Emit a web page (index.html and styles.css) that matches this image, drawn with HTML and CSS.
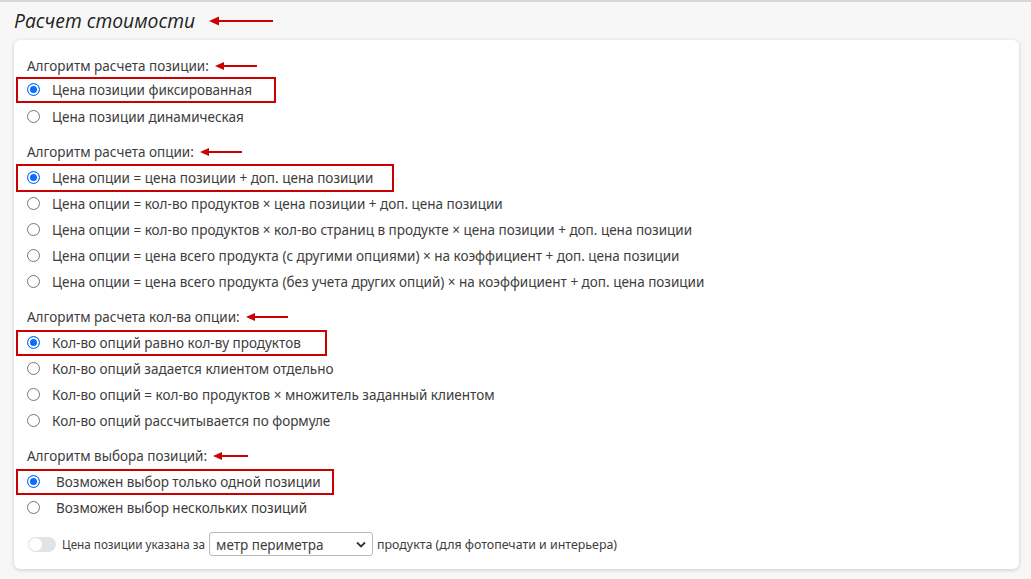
FILE: index.html
```html
<!DOCTYPE html>
<html lang="ru">
<head>
<meta charset="utf-8">
<link rel="stylesheet" href="styles.css">
</head>
<body>
<div class="page">
  <h1 class="title">Расчет стоимости <svg class="arrow big" width="64" height="10" viewBox="0 0 64 10"><polygon points="0,5 10,0.5 10,9.5" fill="#cc0000"/><rect x="8" y="4" width="56" height="2" fill="#cc0000"/></svg></h1>
  <div class="card">
    <div class="group first">
      <div class="label">Алгоритм расчета позиции: <svg class="arrow" width="42" height="8" viewBox="0 0 42 8"><polygon points="0,4 9,0 9,8" fill="#cc0000"/><rect x="7" y="3" width="35" height="2" fill="#cc0000"/></svg></div>
      <div class="row hl p1"><span class="radio on"></span><span>Цена позиции фиксированная</span></div>
      <div class="row"><span class="radio"></span><span>Цена позиции динамическая</span></div>
    </div>
    <div class="group">
      <div class="label">Алгоритм расчета опции: <svg class="arrow" width="42" height="8" viewBox="0 0 42 8"><polygon points="0,4 9,0 9,8" fill="#cc0000"/><rect x="7" y="3" width="35" height="2" fill="#cc0000"/></svg></div>
      <div class="row hl p2"><span class="radio on"></span><span>Цена опции = цена позиции + доп. цена позиции</span></div>
      <div class="row"><span class="radio"></span><span>Цена опции = кол-во продуктов × цена позиции + доп. цена позиции</span></div>
      <div class="row"><span class="radio"></span><span>Цена опции = кол-во продуктов × кол-во страниц в продукте × цена позиции + доп. цена позиции</span></div>
      <div class="row"><span class="radio"></span><span>Цена опции = цена всего продукта (с другими опциями) × на коэффициент + доп. цена позиции</span></div>
      <div class="row"><span class="radio"></span><span>Цена опции = цена всего продукта (без учета других опций) × на коэффициент + доп. цена позиции</span></div>
    </div>
    <div class="group">
      <div class="label">Алгоритм расчета кол-ва опции: <svg class="arrow" width="42" height="8" viewBox="0 0 42 8"><polygon points="0,4 9,0 9,8" fill="#cc0000"/><rect x="7" y="3" width="35" height="2" fill="#cc0000"/></svg></div>
      <div class="row hl p3"><span class="radio on"></span><span>Кол-во опций равно кол-ву продуктов</span></div>
      <div class="row"><span class="radio"></span><span>Кол-во опций задается клиентом отдельно</span></div>
      <div class="row"><span class="radio"></span><span>Кол-во опций = кол-во продуктов × множитель заданный клиентом</span></div>
      <div class="row"><span class="radio"></span><span>Кол-во опций рассчитывается по формуле</span></div>
    </div>
    <div class="group last">
      <div class="label">Алгоритм выбора позиций: <svg class="arrow" width="35" height="8" viewBox="0 0 35 8"><polygon points="0,4 9,0 9,8" fill="#cc0000"/><rect x="7" y="3" width="28" height="2" fill="#cc0000"/></svg></div>
      <div class="row hl p4 wide"><span class="radio on"></span><span>Возможен выбор только одной позиции</span></div>
      <div class="row wide"><span class="radio"></span><span>Возможен выбор нескольких позиций</span></div>
    </div>
    <div class="switch-row">
      <span class="toggle"><span class="knob"></span></span>
      <span class="small">Цена позиции указана за</span>
      <span class="select">метр периметра<svg class="chev" width="10" height="7" viewBox="0 0 10 7"><path d="M1 1.5 L5 5.5 L9 1.5" fill="none" stroke="#333" stroke-width="1.8"/></svg></span>
      <span class="small tail">продукта (для фотопечати и интерьера)</span>
    </div>
  </div>
</div>
</body>
</html>
```
FILE: styles.css
```css
* { box-sizing: border-box; }
html, body { margin: 0; padding: 0; }
body {
  background: #f7f7f7;
  font-family: "Noto Sans", "Open Sans", sans-serif;
  color: #3d3d3d;
  width: 1031px;
  height: 579px;
  overflow: hidden;
  border-top: 2px solid #d6d6d6;
}
.page { padding: 0 12px 0 14px; }
.title {
  margin: 0;
  height: 38px;
  display: flex;
  align-items: center;
  font-family: "Open Sans", "Noto Sans", sans-serif;
  font-style: italic;
  font-weight: 400;
  font-size: 19.3px;
  color: #222;
  padding-bottom: 2px;
}
.arrow { display: inline-block; flex: none; }
.arrow.big { margin-left: 14px; margin-top: 2px; }
.card {
  background: #fff;
  border-radius: 6px;
  box-shadow: 0 1px 4px rgba(0,0,0,0.18);
  padding: 16px 12px 10px 13px;
  width: 1005px;
  height: 529px;
}
.group { margin-bottom: 12px; }
.group.last { margin-bottom: 10px; }
.label {
  font-size: 13.5px;
  height: 20px;
  display: flex;
  align-items: center;
  gap: 6px;
  margin-bottom: 3px;
}
.group.first .label { margin-bottom: 1px; }
.group.first .row + .row { margin-top: 1px; }
.row {
  font-size: 13.5px;
  height: 26px;
  display: flex;
  align-items: center;
  gap: 12px;
  width: fit-content;
}
.row .radio { margin-top: -2px; }
.row.wide { gap: 16px; }
.row.hl {
  border: 2px solid #cc0000;
  margin-left: -11px;
  padding: 0 22px 0 9px;
}
.row.hl.p2 { padding-right: 19px; height: 28px; margin-top: -1px; margin-bottom: -1px; }
.row.hl.p3 { padding-right: 24px; }
.row.hl.p4 { padding-right: 11px; }
.radio {
  width: 13px;
  height: 13px;
  border-radius: 50%;
  border: 1px solid #767676;
  background: #fff;
  flex: none;
}
.radio.on {
  border: 1px solid #0d6efd;
  background: #0d6efd;
  box-shadow: inset 0 0 0 2px #fff;
}
.switch-row {
  display: flex;
  align-items: center;
  height: 26px;
}
.toggle {
  width: 28px;
  height: 15px;
  border-radius: 8px;
  background: #e3e3e3;
  position: relative;
  margin-left: 1px;
  margin-right: 6px;
}
.knob {
  position: absolute;
  left: 1px; top: 1px;
  width: 13px; height: 13px;
  border-radius: 50%;
  background: #fff;
}
.small { font-size: 11.7px; margin-right: 4px; }
.tail { font-size: 12.4px; margin-right: 0; }
.select {
  width: 164px;
  height: 24px;
  border: 1px solid #b8b8b8;
  border-radius: 3px;
  font-size: 13.5px;
  display: flex;
  align-items: center;
  justify-content: space-between;
  padding: 2px 6px 0 6px;
  margin-right: 4px;
}
.chev { margin-top: -2px; }
```
